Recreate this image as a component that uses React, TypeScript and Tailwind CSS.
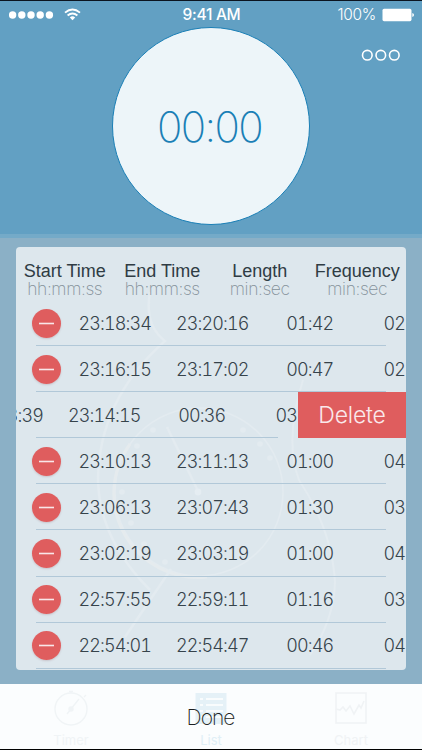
import React from 'react';

type Entry = { start: string; end: string; length: string; freq: string; swiped?: boolean };

const entries: Entry[] = [
  { start: '23:18:34', end: '23:20:16', length: '01:42', freq: '02' },
  { start: '23:16:15', end: '23:17:02', length: '00:47', freq: '02' },
  { start: '23:13:39', end: '23:14:15', length: '00:36', freq: '03', swiped: true },
  { start: '23:10:13', end: '23:11:13', length: '01:00', freq: '04' },
  { start: '23:06:13', end: '23:07:43', length: '01:30', freq: '03' },
  { start: '23:02:19', end: '23:03:19', length: '01:00', freq: '04' },
  { start: '22:57:55', end: '22:59:11', length: '01:16', freq: '03' },
  { start: '22:54:01', end: '22:54:47', length: '00:46', freq: '04' },
];

const columns = [
  ['Start Time', 'hh:mm:ss'],
  ['End Time', 'hh:mm:ss'],
  ['Length', 'min:sec'],
  ['Frequency', 'min:sec'],
];

const dialDots = [
  [153, 430], [137, 446], [122, 492], [131, 523], [144, 544], [165, 562],
  [243, 430], [260, 444], [270, 458],
];

function StatusBar() {
  return (
    <div className="grid h-[29px] grid-cols-3 items-center border-t border-[#0b1420] pl-[9px] pr-[8px] text-white">
      <div className="flex items-center">
        <svg width="45" height="8" viewBox="0 0 45 8" fill="white">
          {[3.6, 12.8, 22, 31.2, 40.4].map((x) => (
            <circle key={x} cx={x} cy="4" r="3.7" />
          ))}
        </svg>
        <svg className="-mt-px ml-[9.5px]" width="17" height="13" viewBox="0 0 17 13" fill="none" stroke="white" strokeWidth="1.9">
          <path d="M1 4.6 Q8.5 -1.8 16 4.6" />
          <path d="M3.6 7.5 Q8.5 3.3 13.4 7.5" />
          <path d="M5.8 9.6 Q8.5 7 11.2 9.6 L8.5 12.3 Z" fill="white" stroke="none" />
        </svg>
      </div>
      <div className="text-center text-[15.5px] font-medium leading-none tracking-[-0.3px]">9:41 AM</div>
      <div className="flex items-center justify-end">
        <span className="text-[15.5px] font-light leading-none tracking-[-0.3px]">100%</span>
        <svg className="ml-[6px]" width="32" height="14" viewBox="0 0 32 14">
          <rect x="0.5" y="0.8" width="29" height="12.4" rx="1.6" fill="white" />
          <path d="M30.3 5 Q32 5.3 32 7 Q32 8.7 30.3 9 Z" fill="white" />
        </svg>
      </div>
    </div>
  );
}

function WatchArt() {
  return (
    <svg className="absolute left-0 top-0" width="390" height="423" viewBox="16 247 390 423" fill="none" stroke="#e3ebf0" strokeWidth="2.5">
      <path d="M150 292 Q144 325 165 341 Q98 400 98 482 Q100 540 150 590" />
      <path d="M303 380 Q284 440 299 480 Q332 530 335 582 Q334 620 310 655" strokeWidth="2" />
      <circle cx="199" cy="492" r="84" strokeWidth="1.6" />
      <path d="M207 577 A84 84 0 0 1 130 444" stroke="#e5ebee" strokeWidth="3" />
      <path d="M167 427 L198 491 M171 569 L125 637" />
      <circle cx="198" cy="492" r="3.4" fill="#e5edf2" stroke="none" />
      <g fill="#e3ebf0" stroke="none">
        {dialDots.map(([x, y]) => (
          <circle key={x} cx={x} cy={y} r="2.8" />
        ))}
      </g>
    </svg>
  );
}

function Row({ entry }: { entry: Entry }) {
  return (
    <div className="relative h-[46.1px] overflow-hidden">
      <div className={'flex h-full items-center ' + (entry.swiped ? '-translate-x-[108px]' : '')}>
        <div className="flex w-[50px] shrink-0 justify-end pr-[5px]">
          <svg className="overflow-visible rounded-full shadow-[0_1px_2px_rgba(120,60,70,0.2)]" width="29" height="29" viewBox="0 0 29 29">
            <circle cx="14.5" cy="14.5" r="14.5" fill="#df5d5e" />
            <rect x="7" y="13.7" width="15" height="1.6" fill="#f9e6e9" />
          </svg>
        </div>
        <div className="grid w-[390px] shrink-0 grid-cols-4 text-center text-[18px] font-light tabular-nums tracking-[-0.9px] text-[#36434b] [font-feature-settings:'calt'_0]">
          <span>{entry.start}</span>
          <span>{entry.end}</span>
          <span>{entry.length}</span>
          <span className="pl-[25px] text-left">{entry.freq}</span>
        </div>
      </div>
      <div className={'absolute bottom-0 left-[20px] h-px bg-[#b1c8d8] ' + (entry.swiped ? 'right-[128px]' : 'right-[20px]')} />
      {entry.swiped && (
        <div className="absolute inset-y-0 right-0 flex w-[108px] items-center justify-center bg-[#df5d5e] text-[23px] font-light tracking-[-0.2px] text-[#fae8eb]">
          Delete
        </div>
      )}
    </div>
  );
}

function TabBar() {
  return (
    <div className="relative flex h-[66px] justify-between border-b border-black bg-[#fbfdfe] px-[34px]">
      <div className="flex w-[74px] flex-col items-center pt-[6px] text-[#f0f4f6]">
        <svg width="36" height="36" viewBox="0 0 36 36" fill="none" stroke="currentColor" strokeWidth="1.4">
          <circle cx="18" cy="19" r="16" />
          <path d="M18 3V1M16 1.5h4M18 19L26 9M31 7l2-2M14 24l4-5" />
          <circle cx="18" cy="19" r="2" fill="currentColor" />
        </svg>
        <span className="mt-[7px] text-[13px] leading-[15px]">Timer</span>
      </div>
      <div className="flex w-[74px] flex-col items-center pt-[8px] text-[#e0eff6]">
        <svg width="32" height="32" viewBox="0 0 32 32">
          <rect x="0.5" y="1" width="31" height="31" fill="#e5f1f7" />
          <path d="M5 7h3M11 7h17M5 13h3M11 13h17M5 19h3M11 19h17M5 25h3M11 25h17" stroke="white" strokeWidth="1.4" />
        </svg>
        <span className="mt-[9px] text-[13px] leading-[15px]">List</span>
      </div>
      <div className="flex w-[74px] flex-col items-center pt-[8px] text-[#f0f3f5]">
        <svg width="32" height="32" viewBox="0 0 32 32" fill="none" stroke="currentColor" strokeWidth="1.6">
          <rect x="1" y="1" width="30" height="30" />
          <path d="M1 17l4 1 3-3 3 4 4-5 4 8 5-9 2 3 3-7" />
        </svg>
        <span className="mt-[9px] text-[13px] leading-[15px]">Chart</span>
      </div>
      <button className="absolute inset-0 pt-[2px] pr-px text-[21px] font-extralight tracking-[-1px] text-[#1b1f22]">Done</button>
    </div>
  );
}

export default function App() {
  return (
    <div className="flex h-[750px] w-[422px] flex-col overflow-hidden bg-[#8bb0c6] font-['Inter','Liberation_Sans',sans-serif]">
      <header className="relative h-[234px] shrink-0 bg-[#62a0c3]">
        <StatusBar />
        <div className="absolute left-[112px] top-[27px] flex size-[198px] items-center justify-center rounded-full border-[1.5px] border-[#1a7fb6] bg-[#edf5f9] pr-[3px] pt-px text-[42px] font-extralight tracking-[-1.6px] text-[#1a7fb6] [font-feature-settings:'calt'_0]">
          00:00
        </div>
        <svg className="absolute left-[361px] top-[48px]" width="40" height="14" viewBox="0 0 40 14" fill="none" stroke="white" strokeWidth="1.6">
          <circle cx="6.3" cy="7.2" r="4.8" />
          <circle cx="19.8" cy="7.2" r="4.8" />
          <circle cx="33.3" cy="7.2" r="4.8" />
        </svg>
      </header>
      <div className="h-[4px] shrink-0 bg-[#74aac8]" />
      <main className="h-[446px] shrink-0 px-[16px] pt-[9px]">
        <section className="relative h-[423px] overflow-hidden rounded-[4px] bg-[#dde7ed]">
          <WatchArt />
          <div className="relative grid h-[53px] grid-cols-4 pt-[14px] text-center font-['Liberation_Sans',sans-serif]">
            {columns.map(([title, unit]) => (
              <div key={title} className="whitespace-nowrap">
                <div className="text-[18px] leading-[20px] text-[#2f3c44]">{title}</div>
                <div className="font-['Inter',sans-serif] text-[17.5px] font-extralight leading-[16px] tracking-[-0.4px] text-[#84919a] [font-feature-settings:'calt'_0]">{unit}</div>
              </div>
            ))}
          </div>
          {entries.map((entry) => (
            <Row key={entry.start} entry={entry} />
          ))}
        </section>
      </main>
      <TabBar />
    </div>
  );
}
